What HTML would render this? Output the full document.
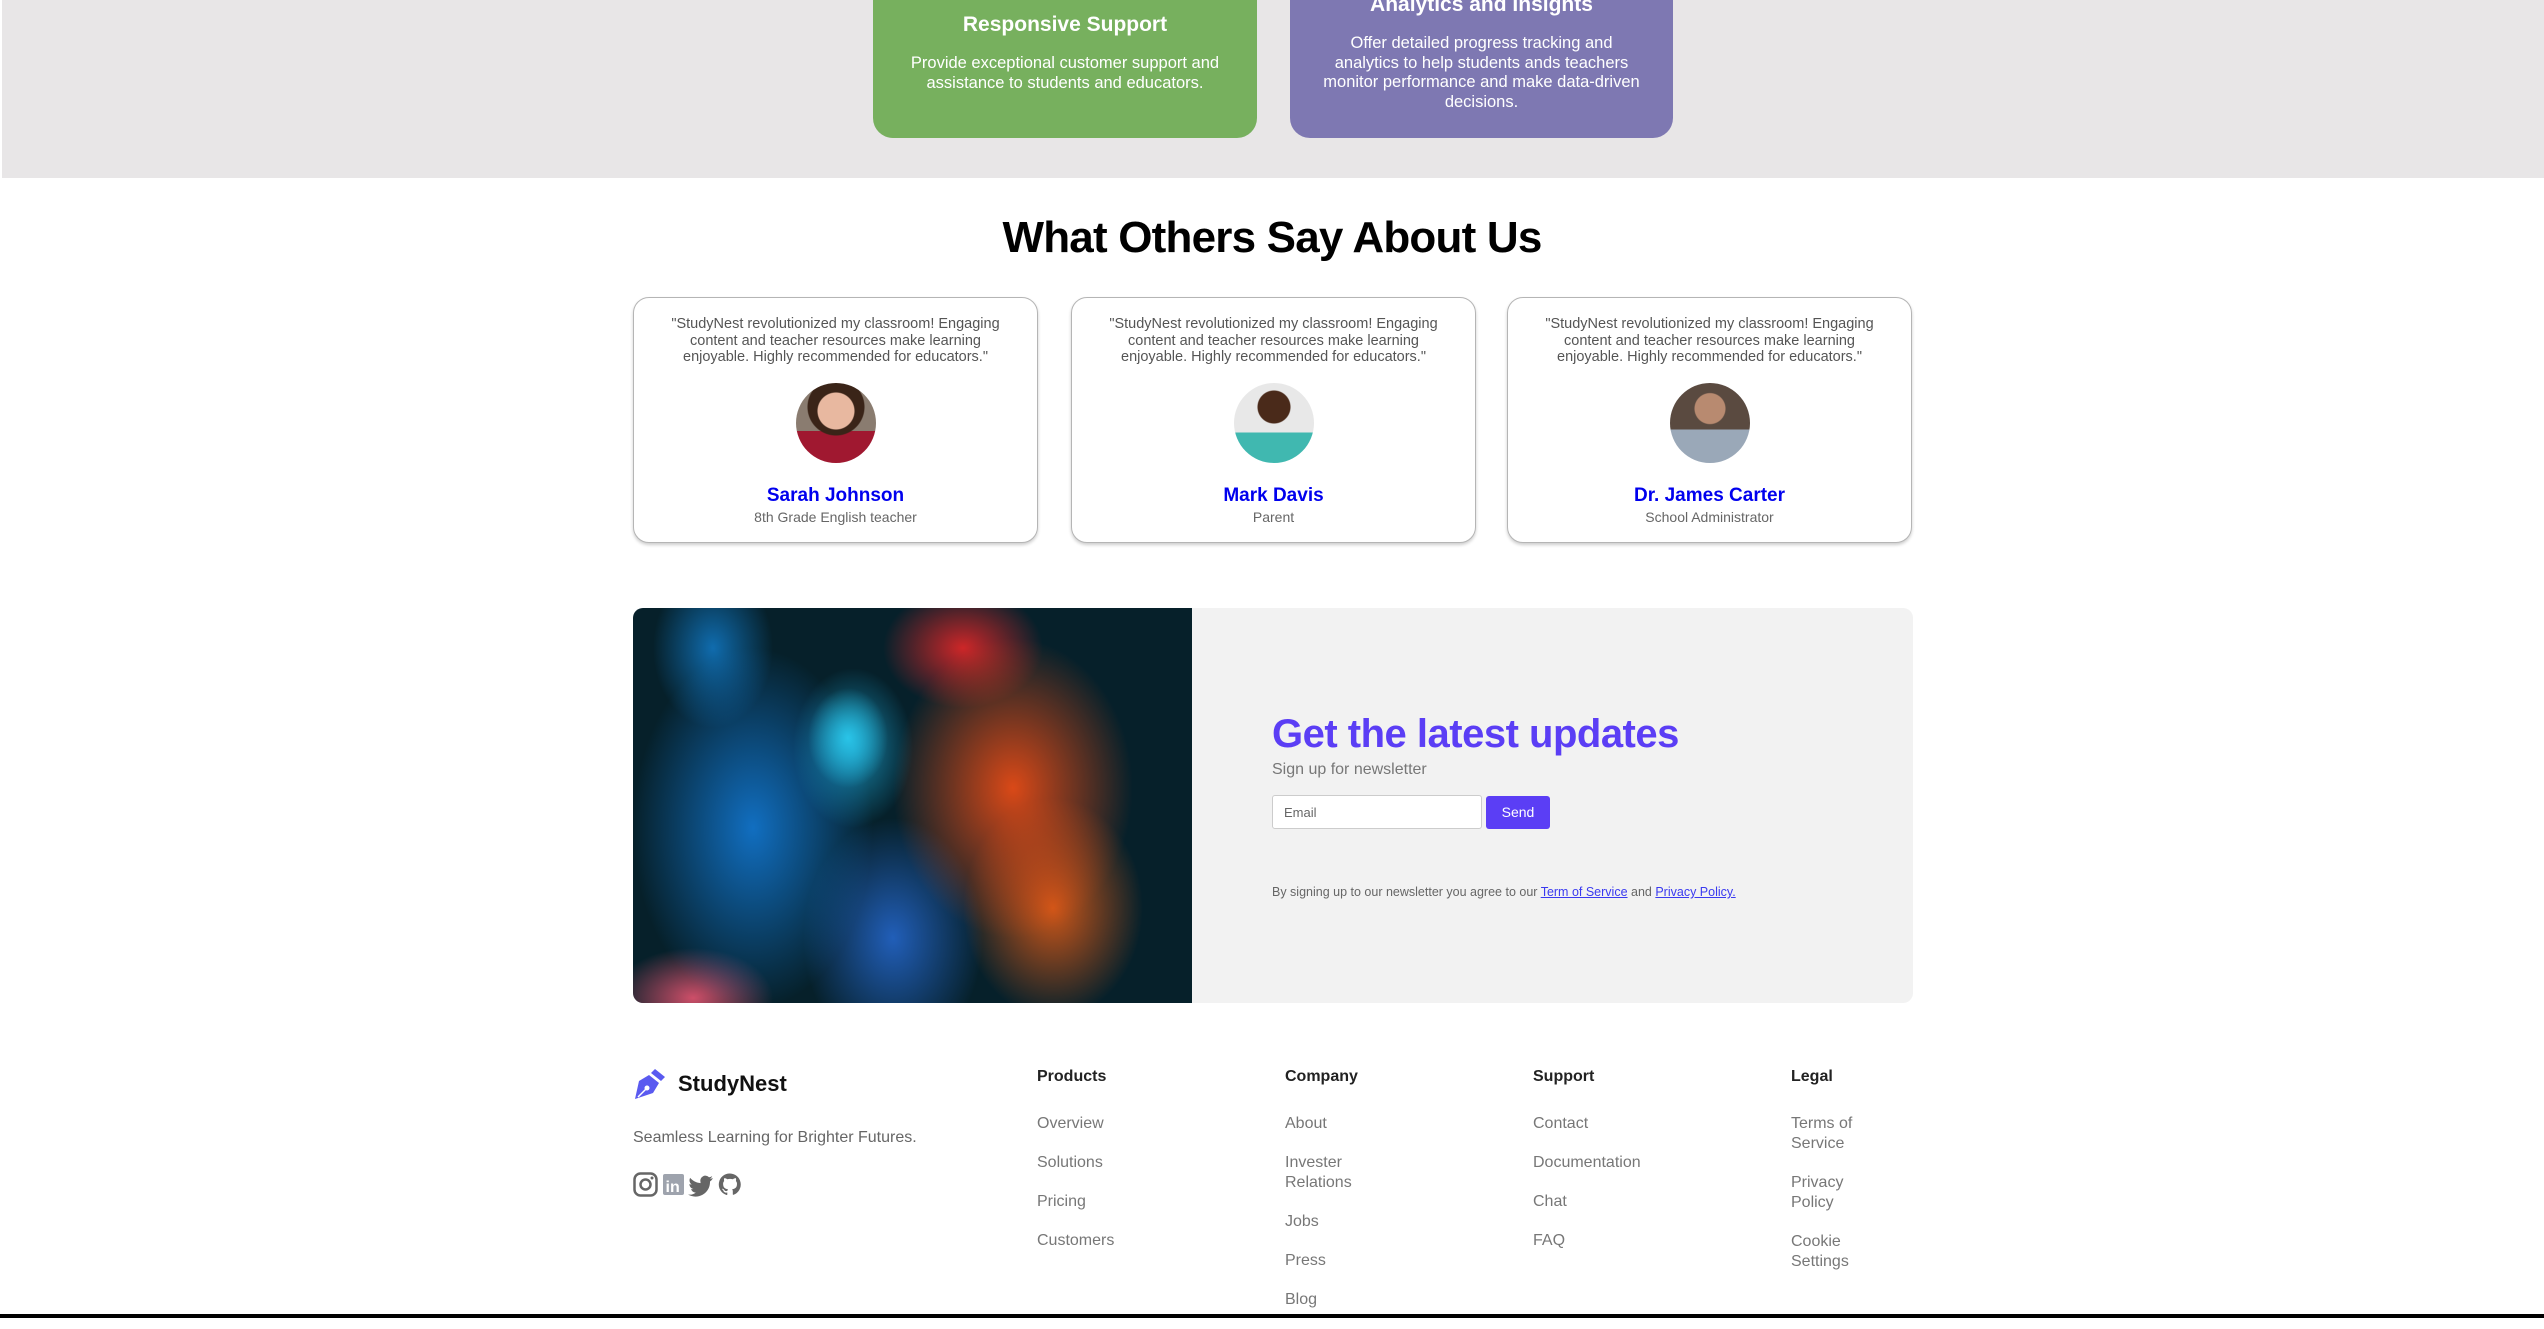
<!DOCTYPE html>
<html><head><meta charset="utf-8">
<style>
*{margin:0;padding:0;box-sizing:border-box}
html,body{width:2544px;height:1318px;overflow:hidden;background:#fff;font-family:"Liberation Sans",Arial,sans-serif}
.abs{position:absolute}
.gray{left:2px;top:0;width:2542px;height:178px;background:#e8e6e7}
.card{top:-40px;height:178px;border-radius:0 0 20px 20px;color:#fff;text-align:center}
.card h3{position:absolute;left:0;right:0;font-size:21px;font-weight:bold}
.card p{position:absolute;left:30px;right:30px;font-size:16.5px;line-height:19.5px}
h2.t{left:0;width:2544px;top:213px;text-align:center;font-size:44px;font-weight:bold;color:#000;letter-spacing:-0.8px}
.tc{top:297px;width:405px;height:246px;border:1.5px solid #b5b5b5;border-radius:16px;box-shadow:0 2px 3px rgba(0,0,0,.2);text-align:center;background:#fff}
.tc p{position:absolute;left:32px;right:32px;top:18px;font-size:14.5px;line-height:16.5px;color:#555}
.tc .av{position:absolute;left:162px;top:85px;width:80px;height:80px;border-radius:50%;overflow:hidden}
.tc .n{position:absolute;left:0;right:0;top:187px;font-size:19px;font-weight:bold;color:#0000ee}
.tc .r{position:absolute;left:0;right:0;top:211px;font-size:14px;color:#666}
.news{left:633px;top:608px;width:1280px;height:395px;background:#f2f2f2;border-radius:10px;overflow:hidden}
.img{left:0;top:0;width:559px;height:395px;background:
radial-gradient(ellipse 40px 50px at 215px 130px,#29c4e8,transparent),
radial-gradient(ellipse 60px 80px at 220px 140px,rgba(30,180,230,.7),transparent),
radial-gradient(ellipse 120px 150px at 380px 180px,rgba(255,80,20,.85),transparent),
radial-gradient(ellipse 90px 110px at 420px 300px,rgba(255,100,20,.8),transparent),
radial-gradient(ellipse 80px 60px at 330px 40px,rgba(255,40,40,.8),transparent),
radial-gradient(ellipse 120px 180px at 120px 220px,rgba(20,130,230,.8),transparent),
radial-gradient(ellipse 90px 120px at 260px 330px,rgba(40,110,220,.8),transparent),
radial-gradient(ellipse 80px 50px at 60px 390px,rgba(255,90,120,.8),transparent),
radial-gradient(ellipse 60px 80px at 80px 40px,rgba(20,140,230,.7),transparent),
#06202a}
.ft{color:#666;font-size:16px}
.col h4{font-size:16px;font-weight:bold;color:#222;margin-bottom:28px}
.col div{font-size:16px;color:#777;line-height:20px;margin-bottom:19px}
</style></head><body>
<div class="abs gray"></div>
<div class="abs card" style="left:873px;width:384px;background:#77b05e">
 <h3 style="top:53px">Responsive Support</h3>
 <p style="top:94px">Provide exceptional customer support and assistance to students and educators.</p>
</div>
<div class="abs card" style="left:1290px;width:383px;background:#7e78b2">
 <h3 style="top:33px">Analytics and Insights</h3>
 <p style="top:74px;left:30px;right:30px">Offer detailed progress tracking and analytics to help students ands teachers monitor performance and make data&#8209;driven decisions.</p>
</div>

<h2 class="abs t">What Others Say About Us</h2>

<div class="abs tc" style="left:633px"><p>"StudyNest revolutionized my classroom! Engaging content and teacher resources make learning enjoyable. Highly recommended for educators."</p>
<div class="av" style="background:radial-gradient(circle at 50% 35%,#e8b8a0 0 18px,transparent 19px),radial-gradient(circle at 50% 30%,#3a2418 0 28px,transparent 29px),linear-gradient(#8a7c70 0 60%,#a01830 60%)"></div>
<div class="n">Sarah Johnson</div><div class="r">8th Grade English teacher</div></div>
<div class="abs tc" style="left:1071px"><p>"StudyNest revolutionized my classroom! Engaging content and teacher resources make learning enjoyable. Highly recommended for educators."</p>
<div class="av" style="background:radial-gradient(circle at 50% 30%,#4a2a1a 0 16px,transparent 17px),linear-gradient(#e8e8e8 0 62%,#40b8b0 62%)"></div>
<div class="n">Mark Davis</div><div class="r">Parent</div></div>
<div class="abs tc" style="left:1507px"><p>"StudyNest revolutionized my classroom! Engaging content and teacher resources make learning enjoyable. Highly recommended for educators."</p>
<div class="av" style="background:radial-gradient(circle at 50% 32%,#b88a70 0 15px,transparent 16px),linear-gradient(#5a4a40 0 58%,#9aa8b8 58%)"></div>
<div class="n">Dr. James Carter</div><div class="r">School Administrator</div></div>

<div class="abs news">
 <div class="abs img"></div>
 <div class="abs" style="left:639px;top:104px;font-size:40px;font-weight:bold;color:#5b3ef5;letter-spacing:-0.5px">Get the latest updates</div>
 <div class="abs" style="left:639px;top:153px;font-size:16px;color:#777">Sign up for newsletter</div>
 <div class="abs" style="left:639px;top:187px;width:210px;height:34px;background:#fff;border:1.5px solid #ccc;border-radius:3px;font-size:13px;color:#666;padding:9px 11px">Email</div>
 <div class="abs" style="left:853px;top:188px;width:64px;height:33px;background:#5b3ef5;border-radius:3px;color:#fff;font-size:14px;text-align:center;line-height:33px">Send</div>
 <div class="abs" style="left:639px;top:277px;font-size:12.5px;color:#666">By signing up to our newsletter you agree to our <u style="color:#3a3af0">Term of Service</u> and <u style="color:#3a3af0">Privacy Policy.</u></div>
</div>

<svg class="abs" style="left:633px;top:1067px" width="34" height="34" viewBox="0 0 34 34"><path d="M22 2l10 8-4 4-10-8z" fill="#5a5af0"/><path d="M16 8l10 8-6 10L2 32l4-18zM9 27l5-6" fill="#5a5af0"/><circle cx="14" cy="21" r="2.5" fill="#fff"/><path d="M5 30l8-8" stroke="#fff" stroke-width="1.5"/></svg>
<div class="abs" style="left:678px;top:1071px;font-size:22px;font-weight:bold;color:#111">StudyNest</div>
<div class="abs ft" style="left:633px;top:1129px">Seamless Learning for Brighter Futures.</div>
<svg class="abs" style="left:633px;top:1172px" width="110" height="26" viewBox="0 0 110 26">
<rect x="1.5" y="1.5" width="22" height="22" rx="6" fill="none" stroke="#666" stroke-width="2.5"/><circle cx="12.5" cy="12.5" r="5" fill="none" stroke="#666" stroke-width="2.5"/><circle cx="19" cy="6" r="1.5" fill="#666"/>
<rect x="30" y="2" width="21" height="21" rx="2" fill="#9ea3ad"/><text x="32.5" y="20" font-family="Liberation Sans" font-weight="bold" font-size="16" fill="#fff">in</text>
<path d="M80 6c-1 .5-2 .7-3 .8 1-.6 1.8-1.6 2.2-2.7-1 .6-2 1-3.2 1.2A5 5 0 0067.5 10c0 .4 0 .8.1 1.1-4.2-.2-7.9-2.2-10.4-5.2-.4.7-.7 1.6-.7 2.5 0 1.7.9 3.3 2.2 4.2-.8 0-1.6-.3-2.3-.6 0 2.4 1.7 4.5 4 5-.7.2-1.5.2-2.3.1.6 2 2.5 3.4 4.7 3.5A10 10 0 0155 22.5 14.5 14.5 0 0077 10.2V9.5c1-.7 2-1.6 3-3.5z" fill="#666"/>
<path d="M97 1.5a11 11 0 00-3.5 21.5c.6.1.8-.2.8-.5v-2c-3 .7-3.7-1.4-3.7-1.4-.5-1.3-1.2-1.6-1.2-1.6-1-.7.1-.7.1-.7 1.1.1 1.7 1.1 1.7 1.1 1 1.7 2.6 1.2 3.2.9.1-.7.4-1.2.7-1.5-2.4-.3-5-1.2-5-5.4 0-1.2.4-2.2 1.1-2.9-.1-.3-.5-1.4.1-2.9 0 0 .9-.3 3 1.1a10.5 10.5 0 015.5 0c2.1-1.4 3-1.1 3-1.1.6 1.5.2 2.6.1 2.9.7.7 1.1 1.7 1.1 2.9 0 4.2-2.6 5.1-5 5.4.4.3.8 1 .8 2v3c0 .3.2.6.8.5A11 11 0 0097 1.5z" fill="#666"/>
</svg>

<div class="abs col" style="left:1037px;top:1068px"><h4>Products</h4><div>Overview</div><div>Solutions</div><div>Pricing</div><div>Customers</div></div>
<div class="abs col" style="left:1285px;top:1068px;width:100px"><h4>Company</h4><div>About</div><div>Invester Relations</div><div>Jobs</div><div>Press</div><div>Blog</div></div>
<div class="abs col" style="left:1533px;top:1068px"><h4>Support</h4><div>Contact</div><div>Documentation</div><div>Chat</div><div>FAQ</div></div>
<div class="abs col" style="left:1791px;top:1068px;width:80px"><h4>Legal</h4><div>Terms of Service</div><div>Privacy Policy</div><div>Cookie Settings</div></div>

<div class="abs" style="left:0;top:1314px;width:2544px;height:4px;background:#000"></div>
</body></html>
